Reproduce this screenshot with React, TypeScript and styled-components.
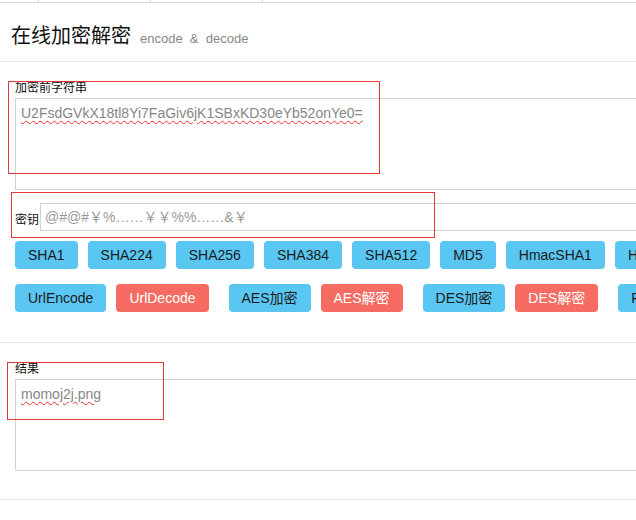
import React from "react";
import styled, { createGlobalStyle } from "styled-components";

const Global = createGlobalStyle`
  html, body { margin: 0; padding: 0; background: #fff; overflow: hidden; }
  body { font-family: "Liberation Sans", Arial, "Noto Sans CJK SC", sans-serif; color: #222; }
`;

const Page = styled.div`
  width: 636px;
  overflow: hidden;
  position: relative;
`;

const TopNav = styled.div`
  display: flex;
  height: 2px;
  border-bottom: 1px solid #dcdcdc;
`;

const NavCell = styled.div<{ $w: number }>`
  width: ${(p) => p.$w}px;
  flex: none;
  border-right: 1px solid #c8c8c8;
`;

const Header = styled.div`
  display: flex;
  align-items: baseline;
  height: 59px;
  box-sizing: border-box;
  padding: 20px 11px 0;
  border-bottom: 1px solid #e6e6e6;
`;

const Title = styled.h1`
  margin: 0;
  font-family: "Noto Sans CJK SC", sans-serif;
  font-weight: 400;
  font-size: 20px;
  line-height: 24px;
  color: #111;
`;

const Subtitle = styled.small`
  margin-left: 9px;
  font-family: "Liberation Sans", Arial, sans-serif;
  font-size: 13px;
  color: #888;
  white-space: pre;
`;

const Section = styled.div<{ $pb: number }>`
  padding: 16px 0 ${(p) => p.$pb}px 15px;
  border-bottom: 1px solid #e6e6e6;
`;

const Label = styled.div`
  font-family: "Noto Sans CJK SC", sans-serif;
  font-size: 12px;
  line-height: 17px;
  color: #111;
  margin-bottom: 3px;
`;

const TextArea = styled.textarea`
  display: block;
  width: 700px;
  height: 92px;
  box-sizing: border-box;
  border: 1px solid #d2d2d2;
  padding: 5px 5px;
  margin: 0;
  resize: none;
  outline: none;
  font-family: "Liberation Sans", Arial, sans-serif;
  font-size: 14px;
  line-height: 18px;
  color: #868686;
  text-decoration: underline wavy #e53030;
  text-decoration-thickness: 1px;
  text-underline-offset: 2px;
`;

const KeyRow = styled.div`
  display: flex;
  align-items: center;
  gap: 1px;
  margin-top: 13px;
`;

const KeyLabel = styled.span`
  flex: none;
  white-space: nowrap;
  font-family: "Noto Sans CJK SC", sans-serif;
  font-size: 12px;
  line-height: 17px;
  color: #111;
  padding-top: 3px;
`;

const KeyInput = styled.input`
  flex: none;
  width: 700px;
  height: 28px;
  box-sizing: border-box;
  border: 1px solid #d2d2d2;
  padding: 0 4px;
  margin: 0;
  outline: none;
  font-family: "Liberation Sans", Arial, "Noto Sans CJK SC", sans-serif;
  font-size: 14px;
  &::placeholder { color: #9a9a9a; }
`;

const ButtonRow = styled.div<{ $mt: number }>`
  display: flex;
  flex-wrap: nowrap;
  gap: 10px;
  margin-top: ${(p) => p.$mt}px;
`;

const Group = styled.div`
  display: flex;
  gap: 10px;
  flex: none;
  margin-right: 10px;
`;

const Btn = styled.button<{ $danger?: boolean }>`
  flex: none;
  height: 28px;
  padding: 0 13px;
  border: none;
  border-radius: 4px;
  background: ${(p) => (p.$danger ? "#f76c62" : "#5ac7f3")};
  color: ${(p) => (p.$danger ? "#fff" : "#1a1a1a")};
  font-family: "Liberation Sans", Arial, "Noto Sans CJK SC", sans-serif;
  font-size: 14px;
  line-height: 28px;
  white-space: nowrap;
  cursor: pointer;
`;

const Marker = styled.div<{ $x: number; $y: number; $w: number; $h: number }>`
  position: absolute;
  left: ${(p) => p.$x}px;
  top: ${(p) => p.$y}px;
  width: ${(p) => p.$w}px;
  height: ${(p) => p.$h}px;
  box-sizing: border-box;
  border: 1px solid #e53838;
  pointer-events: none;
`;

const hashes = ["SHA1", "SHA224", "SHA256", "SHA384", "SHA512", "MD5", "HmacSHA1", "HmacSHA256"];
const pairs: [string, string][] = [
  ["UrlEncode", "UrlDecode"],
  ["AES加密", "AES解密"],
  ["DES加密", "DES解密"],
  ["RC4加密", "RC4解密"],
];

export default function App() {
  return (
    <Page>
      <Global />
      <TopNav>
        <NavCell $w={38} />
        <NavCell $w={111} />
        <NavCell $w={111} />
      </TopNav>
      <Header>
        <Title>在线加密解密</Title>
        <Subtitle>{"encode  &  decode"}</Subtitle>
      </Header>
      <Section $pb={30}>
        <Label>加密前字符串</Label>
        <TextArea readOnly spellCheck={false} value="U2FsdGVkX18tl8Yi7FaGiv6jK1SBxKD30eYb52onYe0=" />
        <KeyRow>
          <KeyLabel>密钥</KeyLabel>
          <KeyInput placeholder="@#@#￥%……￥￥%%……&￥" />
        </KeyRow>
        <ButtonRow $mt={10}>
          {hashes.map((h) => (
            <Btn key={h}>{h}</Btn>
          ))}
        </ButtonRow>
        <ButtonRow $mt={15}>
          {pairs.map(([a, b]) => (
            <Group key={a}>
              <Btn>{a}</Btn>
              <Btn $danger>{b}</Btn>
            </Group>
          ))}
        </ButtonRow>
      </Section>
      <Section $pb={28}>
        <Label>结果</Label>
        <TextArea readOnly spellCheck={false} value="momoj2j.png" />
      </Section>
      <Marker $x={8} $y={81} $w={372} $h={93} />
      <Marker $x={11} $y={192} $w={424} $h={46} />
      <Marker $x={7} $y={362} $w={157} $h={58} />
    </Page>
  );
}
